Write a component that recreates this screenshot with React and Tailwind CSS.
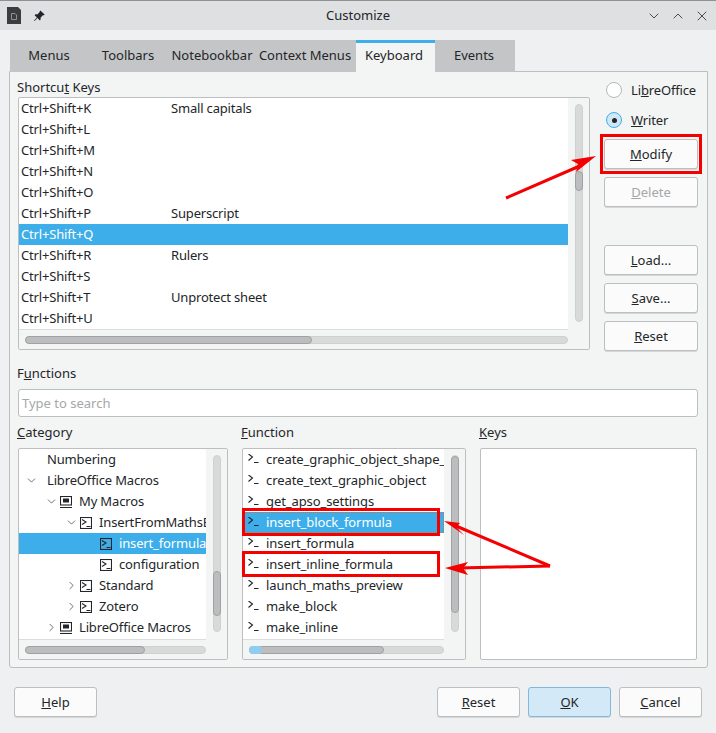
import React from "react";
import { BsPinAngleFill } from "react-icons/bs";
import { ChevronDown, ChevronRight, ChevronUp, X } from "lucide-react";

const shortcuts = [
  ["Ctrl+Shift+K", "Small capitals"],
  ["Ctrl+Shift+L", ""],
  ["Ctrl+Shift+M", ""],
  ["Ctrl+Shift+N", ""],
  ["Ctrl+Shift+O", ""],
  ["Ctrl+Shift+P", "Superscript"],
  ["Ctrl+Shift+Q", "", true],
  ["Ctrl+Shift+R", "Rulers"],
  ["Ctrl+Shift+S", ""],
  ["Ctrl+Shift+T", "Unprotect sheet"],
  ["Ctrl+Shift+U", ""],
];

const categories = [
  { name: "Numbering", indent: 28 },
  { name: "LibreOffice Macros", indent: 28, arrow: "down" },
  { name: "My Macros", indent: 41, arrow: "down", icon: "pc" },
  { name: "InsertFromMathsEditor", indent: 61, arrow: "down", icon: "script" },
  { name: "insert_formula", indent: 81, icon: "script", selected: true },
  { name: "configuration", indent: 81, icon: "script" },
  { name: "Standard", indent: 61, arrow: "right", icon: "script" },
  { name: "Zotero", indent: 61, arrow: "right", icon: "script" },
  { name: "LibreOffice Macros", indent: 41, arrow: "right", icon: "pc" },
];

const functions = [
  "create_graphic_object_shape_",
  "create_text_graphic_object",
  "get_apso_settings",
  "insert_block_formula",
  "insert_formula",
  "insert_inline_formula",
  "launch_maths_preview",
  "make_block",
  "make_inline",
];

function ScriptIcon({ boxed }) {
  return (
    <svg width="12" height="12" viewBox="0 0 12 12" className="shrink-0" fill="none" stroke="#232629" strokeWidth="1.1">
      {boxed && <rect x="0.5" y="0.5" width="11" height="11" />}
      <path d={boxed ? "M2 2.5 L6 5 L2 7.5 M6.5 9.5 H10.5" : "M0.5 0 L4.5 3 L0.5 6.5 M6 8.5 H10.5"} />
    </svg>
  );
}

function MacroIcon() {
  return (
    <svg width="12" height="12" viewBox="0 0 12 12" className="shrink-0" fill="none" stroke="#232629" strokeWidth="1.1">
      <rect x="0.5" y="0.5" width="11" height="8.5" />
      <rect x="3" y="2.5" width="6" height="4" fill="#232629" stroke="none" />
      <path d="M0 11.5 H12" />
    </svg>
  );
}

function Btn({ children, disabled, className = "" }) {
  return (
    <button
      className={`h-[30px] rounded-[3px] border border-[#bcbebf] bg-[#fbfbfb] shadow-[0_1px_0_#d5d6d7] ${
        disabled ? "text-[#a5a7a9]" : "text-[#232629]"
      } ${className}`}
    >
      {children}
    </button>
  );
}

function Radio({ label, checked }) {
  return (
    <div className="flex items-center gap-[9px] h-[16px] tracking-[-0.15px]">
      <span
        className={`w-[16px] h-[16px] rounded-full border flex items-center justify-center ${
          checked ? "border-[#3daee9] bg-[#cfe8f7]" : "border-[#b5b7b9] bg-white"
        }`}
      >
        {checked && <span className="w-[5px] h-[5px] rounded-full bg-[#232629]" />}
      </span>
      <span>{label}</span>
    </div>
  );
}

function HScroll({ thumb, accent }) {
  return (
    <div className="h-[20px] shrink-0 flex items-center pl-[6px] bg-[#f3f4f4] border-t border-[#dcdddd]">
      <div className="relative flex-1 h-[8px] rounded-full bg-[#d8d9d9] border border-[#cfd0d0]">
        <div
          className="absolute left-[-1px] top-[-1px] h-[8px] rounded-full bg-[#bcbdbe] border border-[#9fa1a2]"
          style={{ width: thumb }}
        />
        {accent && <div className="absolute left-[-1px] top-[-1px] h-[8px] w-[12px] rounded-l-full bg-[#8fcdf0]" />}
      </div>
    </div>
  );
}

function VScroll({ top, height }) {
  return (
    <div className="w-[21px] shrink-0 pt-[6px] pb-[27px] flex justify-center bg-[#f3f4f4]">
      <div className="relative w-[8px] h-full rounded-full bg-[#d8d9d9] border border-[#cfd0d0]">
        <div
          className="absolute left-[-1px] w-[8px] rounded-full bg-[#bcbdbe] border border-[#9fa1a2]"
          style={{ top, height }}
        />
      </div>
    </div>
  );
}

function Annotations() {
  return (
    <svg width="716" height="733" className="absolute left-0 top-0 pointer-events-none" fill="none">
      <rect x="601.5" y="135.5" width="99" height="37" stroke="#f40000" strokeWidth="3" />
      <rect x="243.5" y="509.5" width="195" height="25" stroke="#f40000" strokeWidth="3" />
      <rect x="243.5" y="552.5" width="195" height="23" stroke="#f40000" strokeWidth="3" />
      <path d="M506 198 L582 165" stroke="#f40000" strokeWidth="3" />
      <path d="M596 156 L571 160 L578 164 L576 172 Z" fill="#f40000" />
      <path d="M550 566 L456 526" stroke="#f40000" strokeWidth="3" />
      <path d="M444 521 L460 523 L456 527 L464 535 Z" fill="#f40000" />
      <path d="M550 566 L458 568" stroke="#f40000" strokeWidth="3" />
      <path d="M445 568 L468 562 L463 568 L468 575 Z" fill="#f40000" />
    </svg>
  );
}

export default function App() {
  return (
    <div className="relative w-[716px] h-[733px] overflow-hidden bg-[#eff0f1] text-[13px] leading-[21px] text-[#232629] font-['Noto_Sans',sans-serif] flex flex-col">
      {/* title bar */}
      <div className="h-[30px] shrink-0 flex items-center bg-[#dee0e2] border-t border-[#8f9192] pl-[7px] pr-[6px]">
        <svg width="14" height="17" viewBox="0 0 14 17" className="shrink-0">
          <path d="M0 0 H11 L14 3 V17 H0 Z" fill="#3a3d3f" />
          <path d="M4.5 6.5 H8 L9.5 8 V12.5 H4.5 Z" fill="none" stroke="#8f9192" />
        </svg>
        <BsPinAngleFill size={12} className="ml-[12px] text-[#232629]" />
        <div className="flex-1 text-center pl-[25px]">Customize</div>
        <div className="flex items-center gap-[8px]">
          <ChevronDown size={16} strokeWidth={1.2} />
          <ChevronUp size={16} strokeWidth={1.2} />
          <X size={16} strokeWidth={1.2} />
        </div>
      </div>

      {/* tabs */}
      <div className="flex h-[32px] mt-[10px] ml-[10px] relative z-10">
        <div className="w-[78px] pb-[2px] bg-[#c4c5c6] flex items-center justify-center">Menus</div>
        <div className="w-[80px] pb-[2px] bg-[#c4c5c6] flex items-center justify-center">Toolbars</div>
        <div className="w-[88px] pb-[2px] bg-[#c4c5c6] flex items-center justify-center">Notebookbar</div>
        <div className="w-[100px] pb-[2px] pr-[2px] bg-[#c4c5c6] flex items-center justify-center whitespace-nowrap">Context Menus</div>
        <div className="w-[79px] h-[32px] bg-[#f3f4f4] border-t-[3px] border-[#3daee9] flex items-center justify-center pb-[5px] pr-[3px]">Keyboard</div>
        <div className="w-[80px] pb-[2px] pr-[2px] bg-[#c4c5c6] flex items-center justify-center">Events</div>
      </div>

      {/* panel */}
      <div className="h-[597px] ml-[9px] w-[699px] -mt-[1px] bg-[#f3f4f4] border border-[#bcbebf] rounded-b-[3px] px-[8px] flex flex-col">
        <div className="flex gap-[14px] mt-[5px]">
          <div className="w-[572px]">
            <div className="h-[21px] -ml-[1px]">Shortcu<u>t</u> Keys</div>
            <div className="h-[253px] mt-[-1px] flex border border-[#bcbebf] rounded-[2px] bg-white overflow-hidden">
              <div className="flex-1 min-w-0 flex flex-col">
                <div className="flex-1 min-h-0 overflow-hidden tracking-[-0.18px]">
                  {shortcuts.map(([key, name, selected]) => (
                    <div key={key} className={`flex h-[21px] pl-[2px] ${selected ? "bg-[#3daee9] text-white" : ""}`}>
                      <span className="w-[150px]">{key}</span>
                      <span>{name}</span>
                    </div>
                  ))}
                </div>
                <HScroll thumb={287} />
              </div>
              <VScroll top={66} height={20} />
            </div>
          </div>
          <div className="flex-1 flex flex-col">
            <div className="flex flex-col gap-[14px] pl-[2px] mt-[5px]">
              <Radio label={<>Li<u>b</u>reOffice</>} />
              <Radio label={<><u>W</u>riter</>} checked />
            </div>
            <Btn className="mt-[11px] w-[94px]"><u>M</u>odify</Btn>
            <Btn disabled className="mt-[8px] w-[94px]"><u>D</u>elete</Btn>
            <Btn className="mt-[38px] w-[94px]"><u>L</u>oad...</Btn>
            <Btn className="mt-[8px] w-[94px]"><u>S</u>ave...</Btn>
            <Btn className="mt-[8px] w-[94px]"><u>R</u>eset</Btn>
          </div>
        </div>

        <div className="mt-[12px] h-[21px] -ml-[1px]">F<u>u</u>nctions</div>
        <div className="mt-[5px] h-[28px] w-[680px] border border-[#bcbebf] rounded-[3px] bg-white pl-[3px] flex items-center text-[#a5a7a9]">
          Type to search
        </div>

        <div className="flex mt-[5px] gap-[14px]">
          <div className="w-[210px]">
            <div className="h-[21px] -ml-[1px]"><u>C</u>ategory</div>
            <div className="mt-[5px] h-[212px] flex border border-[#bcbebf] rounded-[2px] bg-white overflow-hidden">
              <div className="flex-1 min-w-0 flex flex-col">
                <div className="flex-1 min-h-0 overflow-hidden tracking-[-0.15px]">
                  {categories.map((c, i) => (
                    <div
                      key={i}
                      className={`flex items-center h-[21px] whitespace-nowrap ${c.selected ? "bg-[#3daee9] text-white" : ""}`}
                      style={{ paddingLeft: c.indent }}
                    >
                      {c.arrow && (
                        <span className={`w-[18px] shrink-0 flex justify-center ${c.icon ? "-ml-[18px]" : "-ml-[25px] mr-[7px]"}`}>
                          {c.arrow === "down" ? (
                            <ChevronDown size={13} strokeWidth={1.2} />
                          ) : (
                            <ChevronRight size={13} strokeWidth={1.2} />
                          )}
                        </span>
                      )}
                      {c.icon === "pc" && <span className="mr-[7px] flex shrink-0"><MacroIcon /></span>}
                      {c.icon === "script" && <span className="mr-[7px] flex shrink-0"><ScriptIcon boxed /></span>}
                      {c.name}
                    </div>
                  ))}
                </div>
                <HScroll thumb={120} />
              </div>
              <VScroll top={115} height={45} />
            </div>
          </div>

          <div className="w-[224px]">
            <div className="h-[21px] -ml-[1px]"><u>F</u>unction</div>
            <div className="mt-[5px] h-[212px] flex border border-[#bcbebf] rounded-[2px] bg-white overflow-hidden">
              <div className="flex-1 min-w-0 flex flex-col">
                <div className="flex-1 min-h-0 overflow-hidden tracking-[-0.08px]">
                  {functions.map((f) => (
                    <div
                      key={f}
                      className={`flex items-center h-[21px] whitespace-nowrap gap-[6px] ${
                        f === "insert_block_formula"
                          ? "bg-[#3daee9] text-white pl-[4px] border border-dotted border-[#c9763a]"
                          : "pl-[5px]"
                      }`}
                    >
                      <ScriptIcon />
                      {f}
                    </div>
                  ))}
                </div>
                <HScroll thumb={135} accent />
              </div>
              <VScroll top={0} height={157} />
            </div>
          </div>

          <div className="w-[217px]">
            <div className="h-[21px] -ml-[1px]"><u>K</u>eys</div>
            <div className="mt-[5px] h-[212px] border border-[#bcbebf] rounded-[2px] bg-white" />
          </div>
        </div>
      </div>

      {/* footer */}
      <div className="flex items-center pl-[14px] pr-[14px] mt-[19px]">
        <Btn className="w-[83px]"><u>H</u>elp</Btn>
        <Btn className="w-[83px] ml-auto"><u>R</u>eset</Btn>
        <Btn className="w-[83px] ml-[8px] !bg-[#d3e9f7] !border-[#7fb9dc]"><u>O</u>K</Btn>
        <Btn className="w-[83px] ml-[8px]"><u>C</u>ancel</Btn>
      </div>

      <Annotations />
    </div>
  );
}
